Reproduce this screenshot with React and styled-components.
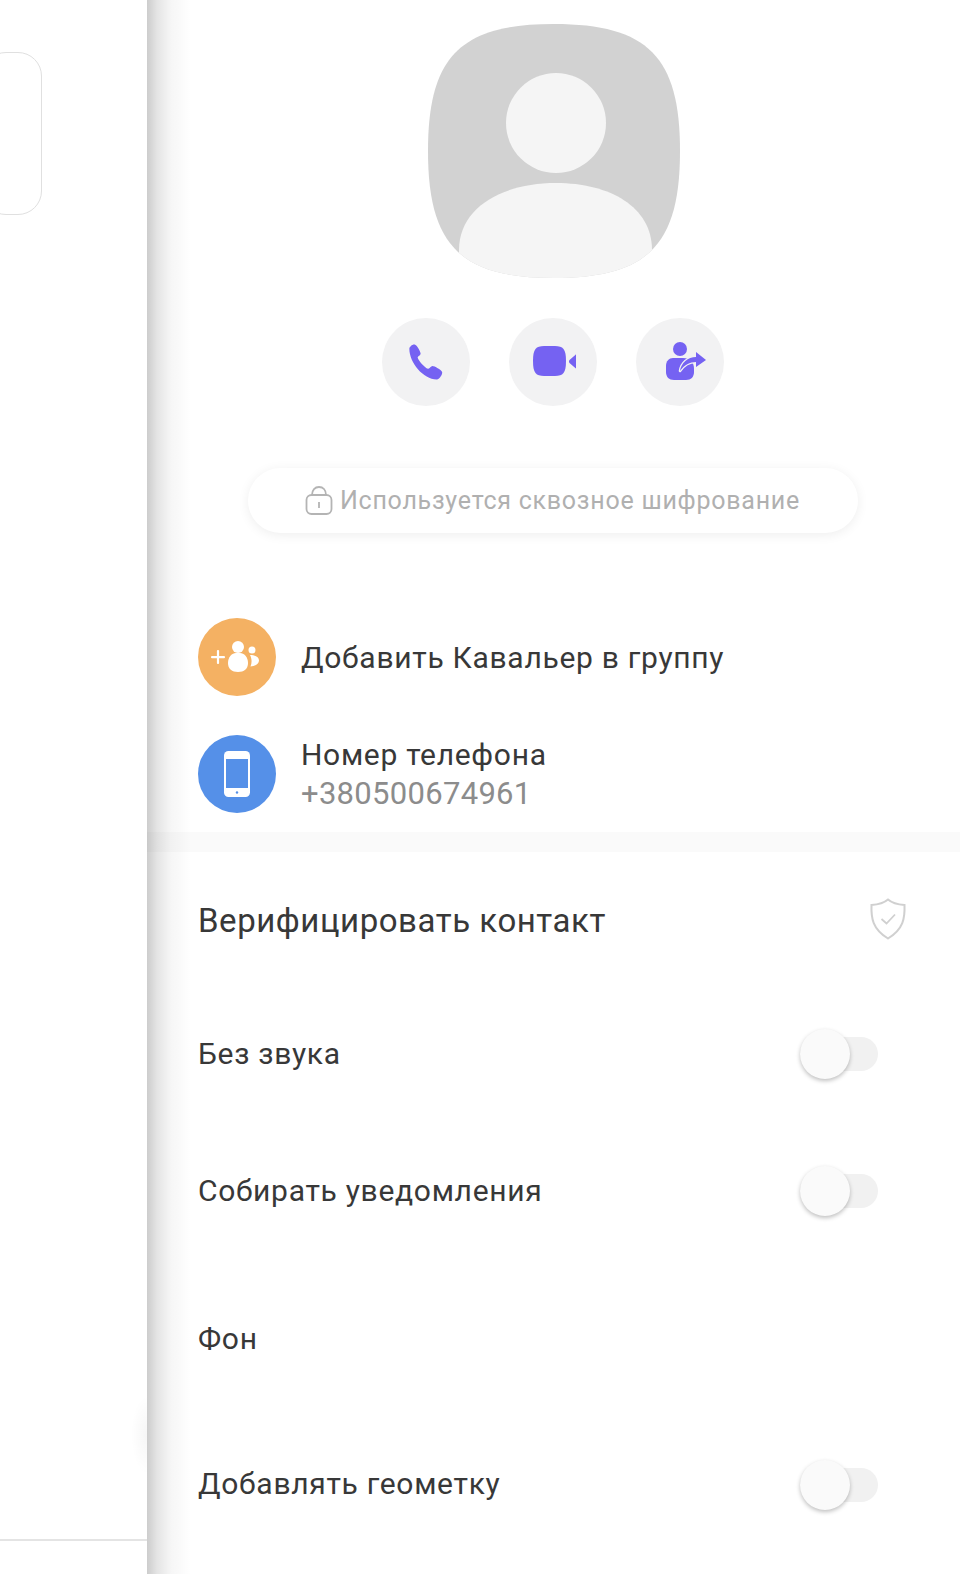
import React from "react";
import styled, { createGlobalStyle } from "styled-components";

const GlobalStyle = createGlobalStyle`
  html, body {
    margin: 0;
    padding: 0;
    background: #fff;
  }
  body {
    font-family: Roboto, "Noto Sans", sans-serif;
    color: #383838;
  }
`;

const Screen = styled.div`
  display: flex;
  width: 960px;
  height: 1574px;
  overflow: hidden;
`;

const Sidebar = styled.aside`
  position: relative;
  display: flex;
  flex-direction: column;
  width: 147px;
  flex-shrink: 0;
  padding-top: 52px;
  box-sizing: border-box;
`;

const ChatCard = styled.div`
  width: 60px;
  height: 163px;
  margin-left: -18px;
  box-sizing: border-box;
  border: 1.5px solid #e0e0e0;
  border-radius: 24px;
`;

const SidebarFooter = styled.div`
  margin-top: auto;
  height: 33px;
  border-top: 2px solid #e4e4e4;
`;

const FabShadow = styled.div`
  position: absolute;
  right: 0;
  top: 1395px;
  width: 16px;
  height: 80px;
  background: radial-gradient(ellipse at right center, rgba(0, 0, 0, 0.035), transparent 70%);
`;

const Panel = styled.main`
  position: relative;
  flex: 1;
  display: flex;
  flex-direction: column;

  &::before {
    content: "";
    position: absolute;
    left: 0;
    top: 0;
    bottom: 0;
    width: 44px;
    pointer-events: none;
    background: linear-gradient(
      90deg,
      rgba(0, 0, 0, 0.2) 0,
      rgba(0, 0, 0, 0.105) 10px,
      rgba(0, 0, 0, 0.035) 24px,
      rgba(0, 0, 0, 0) 44px
    );
  }
`;

const Profile = styled.section`
  display: flex;
  flex-direction: column;
  align-items: center;
  padding: 24px 2px 0 0;
`;

const Avatar = styled.svg`
  display: block;
  width: 252px;
  height: 254px;
  margin-left: 2px;
`;

const Actions = styled.div`
  display: flex;
  gap: 39px;
  margin-top: 40px;
`;

const ActionButton = styled.button`
  display: flex;
  align-items: center;
  justify-content: center;
  width: 88px;
  height: 88px;
  padding: 0;
  border: none;
  border-radius: 50%;
  background: #f2f2f3;
`;

const EncryptionPill = styled.div`
  display: flex;
  align-items: center;
  justify-content: center;
  gap: 7px;
  width: 610px;
  height: 65px;
  margin-top: 62px;
  border-radius: 33px;
  background: #fff;
  box-shadow: 0 2px 12px rgba(0, 0, 0, 0.07);
  font-size: 25px;
  letter-spacing: 0.75px;
  color: #b0b0b0;
`;

const InfoList = styled.section`
  display: flex;
  flex-direction: column;
  gap: 39px;
  padding: 85px 0 19px 51px;
`;

const InfoRow = styled.div`
  display: flex;
  align-items: center;
  gap: 25px;
  height: 78px;
`;

const RoundIcon = styled.div`
  display: flex;
  align-items: center;
  justify-content: center;
  width: 78px;
  height: 78px;
  border-radius: 50%;
  background: ${(p) => p.$color};
`;

const InfoTitle = styled.div`
  font-size: 30px;
  line-height: 38px;
  letter-spacing: 0.7px;
  padding-top: ${(p) => (p.$single ? 2 : 0)}px;
  color: #383838;
`;

const InfoText = styled.div`
  margin-bottom: -1px;
`;

const InfoValue = styled.div`
  font-size: 31px;
  line-height: 38px;
  letter-spacing: 0.3px;
  padding-top: 1px;
  color: #8c8c8c;
`;

const Band = styled.div`
  height: 20px;
  background: #fafafa;
`;

const Settings = styled.section`
  display: flex;
  flex-direction: column;
  padding: 0 86px 0 51px;
`;

const SettingRow = styled.div`
  display: flex;
  align-items: center;
  justify-content: space-between;
  height: ${(p) => p.$height}px;
`;

const SettingLabel = styled.span`
  font-size: ${(p) => (p.$large ? 33 : 30)}px;
  letter-spacing: ${(p) => (p.$large ? 0.55 : 0.7)}px;
  padding: ${(p) => (p.$large ? "2px 0 0" : "0 0 2px")};
  color: #383838;
`;

const Toggle = styled.div`
  position: relative;
  width: 78px;
  height: 34px;
  border-radius: 17px;
  background: #f1f1f1;
  margin-right: -4px;
`;

const Knob = styled.div`
  position: absolute;
  left: 0;
  top: -8px;
  width: 50px;
  height: 50px;
  border-radius: 50%;
  background: #fafafa;
  box-shadow: 0 2px 4px rgba(0, 0, 0, 0.25);
`;

const ShieldWrap = styled.div`
  display: flex;
  margin-right: -33px;
`;

const PhoneIcon = () => (
  <svg width="34" height="36" viewBox="3 0.5 31 33.5" fill="#7562f2">
    <path d="M3 5C3 3 6 .5 8 1c2 .5 5.5 6.5 5.5 8.500 0 1.500-3 2.500-2.700 3.700.6 2.500 6.500 9.300 9.500 10.300 1.500.5 2.700-2.500 4.200-2.500 2 0 8 3.500 9 5.500.5 2-2 6.500-5 7C16 33.500 3 18 3 5Z" />
  </svg>
);

const VideoIcon = () => (
  <svg width="46" height="32" viewBox="-3 0 46 32" fill="#7562f2">
    <path d="M11 0h11c8 0 11 3 11 15s-3 15-11 15H11C3 30 0 27 0 15S3 0 11 0Z" />
    <path d="M44 8.500v13c0 1-1 1.200-1.700.6l-5.800-5.200c-.7-.7-.7-2.100 0-2.800l5.800-5.200c.7-.6 1.700-.4 1.700.6Z" />
  </svg>
);

const ShareContactIcon = () => (
  <svg width="52" height="40" viewBox="-11 0 52 40" fill="#7562f2">
    <circle cx="15" cy="7" r="7" />
    <path d="M1 24c0-5 3-8 7-8h10c7 0 11 4 11 11v3c0 5-3 8-8 8H9c-5 0-8-3-8-8Z" />
    <path
      d="M15 29C16 21 23 15 31 15V10L41 18L31 25V20C25 20 19 23 15 29Z"
      stroke="#f2f2f3"
      strokeWidth="2.500"
      strokeLinejoin="round"
      paintOrder="stroke"
    />
  </svg>
);

const GroupAddIcon = () => (
  <svg width="52" height="36" viewBox="0 0 52 36" fill="#fff">
    <rect x="0" y="17" width="14" height="2.200" rx="1" />
    <rect x="5.900" y="11" width="2.200" height="14" rx="1" />
    <circle cx="27" cy="8" r="6" />
    <path d="M17 24C17 18 21 14 25 14H29C33 14 37 18 37 24C37 30 33 33 27 33C21 33 17 30 17 24Z" />
    <circle cx="41" cy="11" r="3.500" />
    <path d="M39 16C44 16 48 18 48 21.500C48 25 44 27 39.500 27.500C41 24 41 20 39 16Z" />
  </svg>
);

const DeviceIcon = () => (
  <svg width="26" height="46" viewBox="0 0 26 46">
    <rect width="26" height="46" rx="4.500" fill="#fff" />
    <rect x="2" y="8" width="22" height="29" fill="#5590e8" />
    <circle cx="13" cy="41.500" r="1.200" fill="#5590e8" />
  </svg>
);

const LockIcon = () => (
  <svg width="28" height="29" viewBox="0 0 28 29" fill="none" stroke="#b4b4b4" strokeWidth="1.800">
    <rect x="1.500" y="9" width="25" height="19" rx="5" />
    <path d="M7 9c0-5 3-8 7-8s7 3 7 8" />
    <path d="M14 16v6" />
  </svg>
);

const ShieldIcon = () => (
  <svg width="38" height="42" viewBox="0 0 38 42" fill="none" stroke="#d0d0d0" strokeWidth="2">
    <path d="M19 1.500c4 3.500 9 5 16.500 5.500.5 13-1 24-16.500 33.500C3.500 31 2 20 2.500 7 10 6.500 15 5 19 1.500Z" />
    <path d="M12.500 21l5 4.500 8.500-9" strokeWidth="1.800" />
  </svg>
);

const Switch = () => (
  <Toggle>
    <Knob />
  </Toggle>
);

export default function App() {
  return (
    <Screen>
      <GlobalStyle />
      <Sidebar>
        <ChatCard />
        <FabShadow />
        <SidebarFooter />
      </Sidebar>
      <Panel>
        <Profile>
          <Avatar viewBox="0 0 252 254">
            <defs>
              <clipPath id="squircle">
                <path d="M126 0C220 0 252 33 252 127C252 221 220 254 126 254C32 254 0 221 0 127C0 33 32 0 126 0Z" />
              </clipPath>
            </defs>
            <g clipPath="url(#squircle)">
              <rect width="252" height="254" fill="#d2d2d2" />
              <circle cx="128" cy="99" r="50" fill="#f5f5f5" />
              <path d="M31 226C31 183 75 159 128 159C182 159 224 183 224 226V254H31Z" fill="#f5f5f5" />
            </g>
          </Avatar>
          <Actions>
            <ActionButton><PhoneIcon /></ActionButton>
            <ActionButton><VideoIcon /></ActionButton>
            <ActionButton><ShareContactIcon /></ActionButton>
          </Actions>
          <EncryptionPill>
            <LockIcon />
            Используется сквозное шифрование
          </EncryptionPill>
        </Profile>
        <InfoList>
          <InfoRow>
            <RoundIcon $color="#f4b163"><GroupAddIcon /></RoundIcon>
            <InfoTitle $single>Добавить Кавальер в группу</InfoTitle>
          </InfoRow>
          <InfoRow>
            <RoundIcon $color="#5590e8"><DeviceIcon /></RoundIcon>
            <InfoText>
              <InfoTitle>Номер телефона</InfoTitle>
              <InfoValue>+380500674961</InfoValue>
            </InfoText>
          </InfoRow>
        </InfoList>
        <Band />
        <Settings>
          <SettingRow $height={134}>
            <SettingLabel $large>Верифицировать контакт</SettingLabel>
            <ShieldWrap><ShieldIcon /></ShieldWrap>
          </SettingRow>
          <SettingRow $height={136}>
            <SettingLabel>Без звука</SettingLabel>
            <Switch />
          </SettingRow>
          <SettingRow $height={138}>
            <SettingLabel>Собирать уведомления</SettingLabel>
            <Switch />
          </SettingRow>
          <SettingRow $height={159}>
            <SettingLabel>Фон</SettingLabel>
          </SettingRow>
          <SettingRow $height={131}>
            <SettingLabel>Добавлять геометку</SettingLabel>
            <Switch />
          </SettingRow>
        </Settings>
      </Panel>
    </Screen>
  );
}
